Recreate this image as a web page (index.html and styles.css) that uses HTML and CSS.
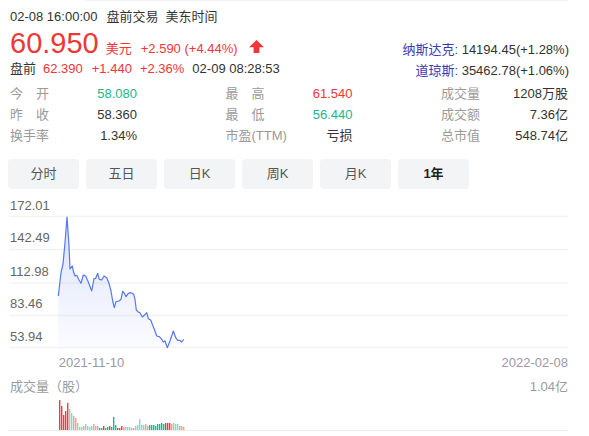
FILE: index.html
```html
<!DOCTYPE html>
<html lang="zh-CN">
<head>
<meta charset="utf-8">
<title>行情</title>
<link rel="stylesheet" href="styles.css">
</head>
<body>
<div class="page">
  <div class="edge"></div>

  <header class="quote">
    <div class="quote-main">
      <div class="meta">
        <span>02-08 16:00:00</span>
        <span class="meta-state">盘前交易</span>
        <span class="meta-zone">美东时间</span>
      </div>
      <div class="price-row">
        <span class="price">60.950</span>
        <span class="unit">美元</span>
        <span class="chg">+2.590 (+4.44%)</span>
        <svg class="arrow" width="15" height="13" viewBox="0 0 15 13" aria-hidden="true">
          <path d="M7.5 0 L15 7.2 H10.4 V13 H4.6 V7.2 H0 Z" fill="#f23535"/>
        </svg>
      </div>
      <div class="pre">
        <span class="pre-label">盘前</span>
        <span class="up pre-price">62.390</span>
        <span class="up pre-chg">+1.440</span>
        <span class="up pre-pct">+2.36%</span>
        <span class="pre-time">02-09 08:28:53</span>
      </div>
    </div>
    <div class="indices">
      <div class="index"><span class="index-name">纳斯达克:</span> 14194.45(+1.28%)</div>
      <div class="index"><span class="index-name">道琼斯:</span> 35462.78(+1.06%)</div>
    </div>
  </header>

  <section class="stats">
    <div class="stat"><span class="stat-label just">今 开</span><span class="stat-val dn">58.080</span></div>
    <div class="stat"><span class="stat-label just">最 高</span><span class="stat-val up">61.540</span></div>
    <div class="stat"><span class="stat-label">成交量</span><span class="stat-val">1208万股</span></div>
    <div class="stat"><span class="stat-label just">昨 收</span><span class="stat-val">58.360</span></div>
    <div class="stat"><span class="stat-label just">最 低</span><span class="stat-val dn">56.440</span></div>
    <div class="stat"><span class="stat-label">成交额</span><span class="stat-val">7.36亿</span></div>
    <div class="stat"><span class="stat-label">换手率</span><span class="stat-val">1.34%</span></div>
    <div class="stat"><span class="stat-label">市盈(TTM)</span><span class="stat-val">亏损</span></div>
    <div class="stat"><span class="stat-label">总市值</span><span class="stat-val">548.74亿</span></div>
  </section>

  <nav class="tabs">
    <span class="tab">分时</span>
    <span class="tab">五日</span>
    <span class="tab">日K</span>
    <span class="tab">周K</span>
    <span class="tab">月K</span>
    <span class="tab tab-active">1年</span>
  </nav>

  <svg class="price-chart" width="561" height="188" viewBox="0 0 561 188">
    <defs>
      <linearGradient id="areaFill" x1="0" y1="0" x2="0" y2="1">
        <stop offset="0" stop-color="#4e6ef2" stop-opacity="0.2"/>
        <stop offset="1" stop-color="#4e6ef2" stop-opacity="0.02"/>
      </linearGradient>
    </defs>
    <g class="grid">
      <line x1="1" y1="27.5" x2="560" y2="27.5"/>
      <line x1="1" y1="60.5" x2="560" y2="60.5"/>
      <line x1="1" y1="94" x2="560" y2="94"/>
      <line x1="1" y1="126.5" x2="560" y2="126.5"/>
      <line x1="1" y1="158.5" x2="560" y2="158.5"/>
    </g>
    <g class="axis-y">
      <text x="2" y="20.5">172.01</text>
      <text x="2" y="52.5">142.49</text>
      <text x="2" y="86.5">112.98</text>
      <text x="2" y="119">83.46</text>
      <text x="2" y="152">53.94</text>
    </g>
    <path class="area" d="M50.3 107 L53 83.7 L55 75 L57 53.7 L59 28 L61 57 L62 80 L64.3 77 L65.3 82 L67 87 L68.7 86.3 L71 91 L73 94.3 L75.3 86 L77.7 87 L80.3 93 L83.7 102 L86 89.7 L87.7 89.3 L89.7 84.3 L91.3 90.3 L93.7 91 L96 87 L98.7 88.7 L101 94.3 L103 102 L104.7 112 L106.3 118.7 L108 112.7 L111 112 L113 110.3 L114.7 102 L116.3 104.3 L118 107.7 L120.3 104.3 L123 103.7 L125.7 105.3 L127 110.3 L128.3 121 L130.3 123 L132 123.7 L134.3 128 L136.3 126.3 L138.7 123.7 L140.3 129.7 L142.7 131 L144.3 135.3 L146.3 140.3 L148.7 147 L151.3 147.7 L153.7 150.3 L155.3 153 L157 152 L159.3 158.7 L162 152 L165.3 142 L167.7 148.7 L169.7 151.3 L172 151.3 L173.7 153 L175.7 150.3 L175.7 158 L50.3 158 Z"/>
    <path class="line" d="M50.3 107 L53 83.7 L55 75 L57 53.7 L59 28 L61 57 L62 80 L64.3 77 L65.3 82 L67 87 L68.7 86.3 L71 91 L73 94.3 L75.3 86 L77.7 87 L80.3 93 L83.7 102 L86 89.7 L87.7 89.3 L89.7 84.3 L91.3 90.3 L93.7 91 L96 87 L98.7 88.7 L101 94.3 L103 102 L104.7 112 L106.3 118.7 L108 112.7 L111 112 L113 110.3 L114.7 102 L116.3 104.3 L118 107.7 L120.3 104.3 L123 103.7 L125.7 105.3 L127 110.3 L128.3 121 L130.3 123 L132 123.7 L134.3 128 L136.3 126.3 L138.7 123.7 L140.3 129.7 L142.7 131 L144.3 135.3 L146.3 140.3 L148.7 147 L151.3 147.7 L153.7 150.3 L155.3 153 L157 152 L159.3 158.7 L162 152 L165.3 142 L167.7 148.7 L169.7 151.3 L172 151.3 L173.7 153 L175.7 150.3"/>
    <g class="axis-x">
      <text x="50.7" y="178">2021-11-10</text>
      <text x="560" y="178" text-anchor="end">2022-02-08</text>
    </g>
  </svg>

  <div class="vol-head">
    <span>成交量（股）</span>
    <span>1.04亿</span>
  </div>

  <svg class="vol-chart" width="561" height="40" viewBox="0 0 561 40">
    <line class="vol-base" x1="0" y1="33.5" x2="560" y2="33.5"/>
    <g class="bars">
      <rect class="r" x="51" y="3" width="1.4" height="30"/>
      <rect class="r" x="53" y="9" width="1.4" height="24"/>
      <rect class="r" x="55" y="18" width="1.4" height="15"/>
      <rect class="r" x="57" y="14" width="1.4" height="19"/>
      <rect class="r" x="59" y="6" width="1.4" height="27"/>
      <rect class="gl" x="61" y="12" width="1.4" height="21"/>
      <rect class="gl" x="63" y="16" width="1.4" height="17"/>
      <rect class="rl" x="65" y="19" width="1.4" height="14"/>
      <rect class="rl" x="67" y="21" width="1.4" height="12"/>
      <rect class="gl" x="69" y="26" width="1.4" height="7"/>
      <rect class="gl" x="71" y="30" width="1.4" height="3"/>
      <rect class="gl" x="73" y="30" width="1.4" height="3"/>
      <rect class="rl" x="75" y="29" width="1.4" height="4"/>
      <rect class="gl" x="77" y="27" width="1.4" height="6"/>
      <rect class="gl" x="79" y="29" width="1.4" height="4"/>
      <rect class="gl" x="81" y="30" width="1.4" height="3"/>
      <rect class="gl" x="83" y="29" width="1.4" height="4"/>
      <rect class="rl" x="85" y="27" width="1.4" height="6"/>
      <rect class="rl" x="87" y="29" width="1.4" height="4"/>
      <rect class="rl" x="89" y="29" width="1.4" height="4"/>
      <rect class="g" x="91" y="31" width="1.4" height="2"/>
      <rect class="g" x="93" y="31" width="1.4" height="2"/>
      <rect class="r" x="95" y="29" width="1.4" height="4"/>
      <rect class="g" x="97" y="31" width="1.4" height="2"/>
      <rect class="g" x="99" y="30" width="1.4" height="3"/>
      <rect class="r" x="101" y="29" width="1.4" height="4"/>
      <rect class="g" x="103" y="30" width="1.4" height="3"/>
      <rect class="g" x="105" y="20" width="1.4" height="13"/>
      <rect class="g" x="107" y="28" width="1.4" height="5"/>
      <rect class="r" x="109" y="31" width="1.4" height="2"/>
      <rect class="r" x="111" y="31" width="1.4" height="2"/>
      <rect class="r" x="113" y="29" width="1.4" height="4"/>
      <rect class="rl" x="115" y="30" width="1.4" height="3"/>
      <rect class="gl" x="117" y="30" width="1.4" height="3"/>
      <rect class="gl" x="119" y="30" width="1.4" height="3"/>
      <rect class="gl" x="121" y="30" width="1.4" height="3"/>
      <rect class="rl" x="123" y="31" width="1.4" height="2"/>
      <rect class="rl" x="125" y="31" width="1.4" height="2"/>
      <rect class="gl" x="127" y="29" width="1.4" height="4"/>
      <rect class="gl" x="129" y="28" width="1.4" height="5"/>
      <rect class="gl" x="131" y="22" width="1.4" height="11"/>
      <rect class="gl" x="133" y="28" width="1.4" height="5"/>
      <rect class="gl" x="135" y="28" width="1.4" height="5"/>
      <rect class="rl" x="137" y="27" width="1.4" height="6"/>
      <rect class="rl" x="139" y="29" width="1.4" height="4"/>
      <rect class="g" x="141" y="28" width="1.4" height="5"/>
      <rect class="g" x="143" y="28" width="1.4" height="5"/>
      <rect class="g" x="145" y="28" width="1.4" height="5"/>
      <rect class="g" x="147" y="29" width="1.4" height="4"/>
      <rect class="g" x="149" y="27" width="1.4" height="6"/>
      <rect class="g" x="151" y="27" width="1.4" height="6"/>
      <rect class="g" x="153" y="26" width="1.4" height="7"/>
      <rect class="g" x="155" y="27" width="1.4" height="6"/>
      <rect class="r" x="157" y="26" width="1.4" height="7"/>
      <rect class="r" x="159" y="26" width="1.4" height="7"/>
      <rect class="r" x="161" y="26" width="1.4" height="7"/>
      <rect class="rl" x="163" y="27" width="1.4" height="6"/>
      <rect class="gl" x="165" y="26" width="1.4" height="7"/>
      <rect class="gl" x="167" y="27" width="1.4" height="6"/>
      <rect class="gl" x="169" y="27" width="1.4" height="6"/>
      <rect class="rl" x="171" y="29" width="1.4" height="4"/>
      <rect class="rl" x="173" y="29" width="1.4" height="4"/>
      <rect class="rl" x="175" y="30" width="1.4" height="3"/>
    </g>
  </svg>
</div>
</body>
</html>
```

FILE: styles.css
```css
* {
  box-sizing: border-box;
}

body {
  margin: 0;
  background: #fff;
  font-family: "Liberation Sans", "Noto Sans CJK SC", sans-serif;
  font-size: 13px;
  color: #333;
}

.page {
  width: 569px;
  padding-left: 8px;
}

.edge {
  height: 1px;
  margin-left: 77px;
  width: 483px;
  background: #f2f2f2;
}

/* quote header */
.quote {
  display: flex;
  justify-content: space-between;
  align-items: flex-end;
  padding: 6px 0 0 2px;
}

.meta {
  display: flex;
  line-height: 20px;
  color: #333;
}

.meta-state {
  margin-left: 9px;
}

.meta-zone {
  margin-left: 7px;
}

.price-row {
  display: flex;
  align-items: baseline;
  margin-top: 1px;
  height: 30px;
  line-height: 30px;
  color: #f23535;
}

.price {
  font-size: 29px;
}

.unit {
  margin-left: 7px;
}

.chg {
  margin-left: 9px;
}

.arrow {
  margin-left: 11px;
  display: block;
  align-self: auto;
}

.pre {
  display: flex;
  line-height: 20px;
  margin-top: 1px;
}

.pre-price {
  margin-left: 7px;
}

.pre-chg {
  margin-left: 9px;
}

.pre-pct {
  margin-left: 8px;
}

.pre-time {
  margin-left: 8px;
}

.up {
  color: #f23535;
}

.dn {
  color: #17b891;
}

.indices {
  text-align: right;
  line-height: 21px;
  margin-bottom: -1.5px;
}

.index-name {
  color: #3a3ab4;
}

/* stats table */
.stats {
  display: grid;
  grid-template-columns: repeat(3, 127px);
  justify-content: space-between;
  width: 558px;
  margin: 4px 0 0 2px;
  line-height: 21px;
}

.stat {
  display: flex;
  justify-content: space-between;
}

.stat-label {
  color: #9a9a9a;
}

.stat-label.just {
  display: inline-block;
  width: 39px;
  text-align: justify;
  text-align-last: justify;
}

/* period tabs */
.tabs {
  display: flex;
  gap: 7px;
  margin-top: 13px;
}

.tab {
  width: 71px;
  height: 30px;
  line-height: 30px;
  text-align: center;
  background: #f3f4f6;
  border-radius: 4px;
  color: #555;
}

.tab-active {
  color: #1f1f1f;
  font-weight: bold;
}

/* price chart */
.price-chart {
  display: block;
}

.grid line {
  stroke: #f3f3f3;
  stroke-width: 1.5;
}

.axis-y text {
  font-size: 13px;
  fill: #666;
}

.axis-x text {
  font-size: 13px;
  fill: #9a9aa6;
}

.area {
  fill: url(#areaFill);
}

.line {
  fill: none;
  stroke: #5677f2;
  stroke-width: 1.2;
  stroke-linejoin: round;
}

/* volume */
.vol-head {
  display: flex;
  justify-content: space-between;
  width: 558px;
  margin-left: 2px;
  line-height: 20px;
  color: #9a9aa0;
}

.vol-chart {
  display: block;
}

.vol-base {
  stroke: #ececec;
  stroke-width: 1;
}

.bars .r {
  fill: #f23c3c;
}

.bars .rl {
  fill: #f79a9a;
}

.bars .g {
  fill: #14bd8e;
}

.bars .gl {
  fill: #80dcc4;
}
```
